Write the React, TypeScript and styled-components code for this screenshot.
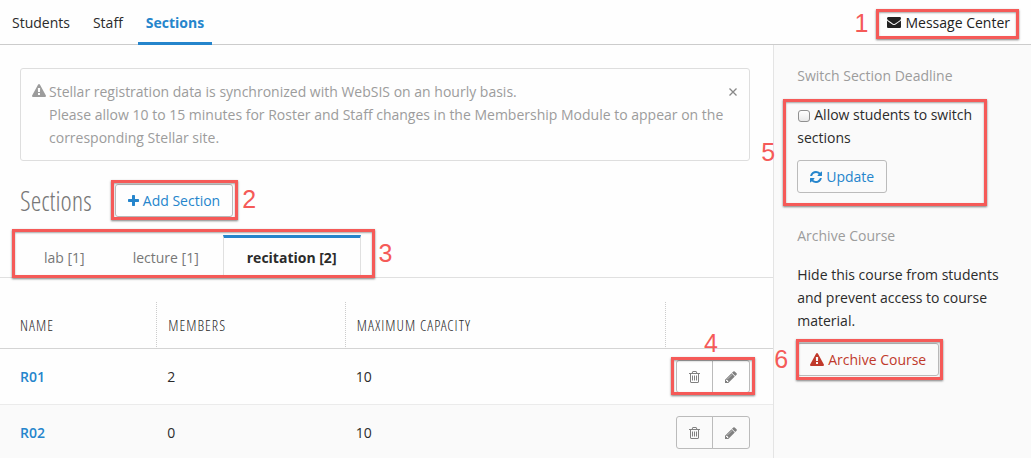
import React from "react";
import styled, { createGlobalStyle, css } from "styled-components";

const color = {
  text: "#2b2b2b",
  muted: "#9c9c9c",
  blue: "#2585cc",
  red: "#c0392b",
  line: "#cccccc",
  softLine: "#e4e4e4",
  panel: "#fafafa",
  callout: "#f55a58",
};

const condensed = `"Open Sans Condensed Light", "OpenSansCondensed-Light", "Open Sans Light Condensed", "Liberation Sans Narrow", "Open Sans Condensed", sans-serif`;

const GlobalStyle = createGlobalStyle`
  *, *::before, *::after { box-sizing: border-box; }
  body {
    margin: 0;
    background: #fefefe;
    color: ${color.text};
    font: 14px/23px "Open Sans", "Noto Sans", sans-serif;
  }
  a { text-decoration: none; color: inherit; }
  p, h1, h2 { margin: 0; }
`;

const Page = styled.div`
  display: flex;
  flex-direction: column;
  height: 100vh;
  overflow: hidden;
`;

const Header = styled.header`
  display: flex;
  flex: none;
  justify-content: space-between;
  align-items: stretch;
  height: 45px;
  padding: 0 21px 0 4px;
  border-bottom: 1px solid ${color.line};
`;

const Nav = styled.nav`
  display: flex;
  gap: 7px;
`;

const NavLink = styled.a<{ $active?: boolean }>`
  height: 45px;
  padding: 11px 8px 0;
  border-bottom: 3px solid transparent;
  ${(p) =>
    p.$active &&
    css`
      border-color: ${color.blue};
      color: ${color.blue};
      font-weight: 700;
    `}
`;

const MessageLink = styled.a`
  display: flex;
  align-items: center;
  gap: 4px;
  color: #222;
`;

const Body = styled.div`
  display: flex;
  flex: 1;
  min-height: 0;
`;

const Main = styled.main`
  flex: 0 0 75%;
  min-width: 0;
`;

const Sidebar = styled.aside`
  flex: 1;
  min-width: 0;
  padding: 19px 20px 0 23px;
  border-left: 1px solid ${color.softLine};
  background: ${color.panel};
`;

const Notice = styled.div`
  display: flex;
  align-items: flex-start;
  gap: 3px;
  margin: 23px 23px 0 20px;
  padding: 11px 12px 11px 11px;
  border: 1px solid #dedede;
  border-radius: 3px;
  color: ${color.muted};
  svg { margin-top: 4px; }
  p { flex: 1; }
`;

const CloseButton = styled.button`
  width: 8px;
  height: 23px;
  padding: 0;
  border: 0;
  background: none;
  color: #888;
  display: flex;
  align-items: center;
  justify-content: center;
  svg { margin: 0; }
`;

const TitleRow = styled.div`
  display: flex;
  align-items: center;
  gap: 23px;
  height: 33px;
  margin: 23px 20px 18px;
`;

const Title = styled.h1`
  color: #777;
  font: 300 27px/32px ${condensed};
`;

const Button = styled.button<{ $tone?: string }>`
  display: inline-flex;
  align-items: center;
  gap: 4px;
  height: 33px;
  padding: 0 12px;
  border: 1px solid #bbb;
  border-radius: 3px;
  background: transparent;
  color: ${(p) => p.$tone ?? color.blue};
  font: inherit;
`;

const Tabs = styled.div`
  display: flex;
  height: 43px;
  padding-left: 20px;
  border-bottom: 1px solid #e0e0e0;
`;

const TabRow = styled.div`
  display: flex;
`;

const Tab = styled.button<{ $active?: boolean }>`
  height: 42px;
  padding: 0 24px;
  border: 0;
  border-top: 3px solid transparent;
  background: none;
  color: #777;
  font: inherit;
  ${(p) =>
    p.$active &&
    css`
      padding: 0 23px;
      border-top-color: ${color.blue};
      border-left: 1px solid #e0e0e0;
      border-right: 1px solid #e0e0e0;
      color: ${color.text};
      font-weight: 700;
    `}
`;

const Table = styled.table`
  width: 100%;
  margin-top: 24px;
  border-collapse: separate;
  border-spacing: 0;
  table-layout: fixed;
`;

const HeadCell = styled.th<{ $width: string }>`
  width: ${(p) => p.$width};
  height: 47px;
  padding: 0 11px;
  border-bottom: 1px solid #d4d4d4;
  border-left: 1px dotted #ccc;
  color: ${color.text};
  font: 300 15px/23px ${condensed};
  letter-spacing: 1px;
  text-align: left;
  text-transform: uppercase;
  &:first-child { padding-left: 20px; border-left: 0; }
`;

const Row = styled.tr`
  &:nth-child(even) { background: ${color.panel}; }
`;

const Cell = styled.td`
  height: 56px;
  padding: 0 10px 0 11px;
  border-bottom: 1px solid #ebebeb;
  &:first-child { padding-left: 20px; }
`;

const SectionLink = styled.a`
  color: ${color.blue};
  font-weight: 600;
`;

const ButtonGroup = styled.div`
  display: flex;
`;

const IconButton = styled.button`
  display: flex;
  align-items: center;
  justify-content: center;
  width: 37px;
  height: 33px;
  padding: 0;
  border: 1px solid #bbb;
  border-radius: 3px 0 0 3px;
  background: transparent;
  color: #808080;
  & + & {
    width: 38px;
    margin-left: -1px;
    border-radius: 0 3px 3px 0;
  }
`;

const SideHeading = styled.h2`
  color: ${color.muted};
  font-size: 14px;
  font-weight: 400;
`;

const SideBlock = styled.div`
  display: flex;
  flex-direction: column;
  align-items: flex-start;
  gap: 11px;
  margin: 16px 0 31px;
`;

const Checkbox = styled.input`
  appearance: none;
  width: 12px;
  height: 12px;
  margin: 0 4px 0 1px;
  border: 1px solid #909090;
  border-radius: 3px;
  background: linear-gradient(#fff, #e8e8e8);
  vertical-align: -2px;
`;

const CalloutBox = styled.div`
  position: relative;
  display: flex;
  width: fit-content;
`;

const Ring = styled.span<{ $inset: string }>`
  position: absolute;
  inset: ${(p) => p.$inset};
  border: 3px solid ${color.callout};
  box-shadow: 0 1px 2px rgba(0, 0, 0, 0.5), inset 0 1px 2px rgba(0, 0, 0, 0.35);
  pointer-events: none;
`;

type Side = "left" | "right" | "top";

const Marker = styled.span<{ $side: Side }>`
  position: absolute;
  color: ${color.callout};
  font: 25px/24px "Liberation Sans", Arial, sans-serif;
  ${(p) =>
    p.$side === "top"
      ? "left: 0; right: 4px; bottom: 100%; margin-bottom: 5px; text-align: center;"
      : "top: 50%; margin-top: -13px;"}
  ${(p) => p.$side === "left" && "right: 100%; margin-right: 11px;"}
  ${(p) => p.$side === "right" && "left: 100%; margin-left: 7px;"}
`;

function Callout(props: {
  n: number;
  side: Side;
  inset: string;
  children: React.ReactNode;
}) {
  return (
    <CalloutBox>
      {props.children}
      <Ring $inset={props.inset}>
        <Marker $side={props.side}>{props.n}</Marker>
      </Ring>
    </CalloutBox>
  );
}

const icons = {
  warning: {
    width: 14,
    viewBox: "0 0 1792 1792",
    d: "M1024 1375v-190q0-14-9.5-23.5t-22.5-9.5h-192q-13 0-22.5 9.5t-9.5 23.5v190q0 14 9.5 23.5t22.5 9.5h192q13 0 22.5-9.5t9.5-23.5zm-2-374l18-459q0-12-10-19-13-11-24-11h-220q-11 0-24 11-10 7-10 21l17 457q0 10 10 16.5t24 6.5h185q14 0 23.5-6.5t10.5-16.5zm-14-934l768 1408q35 63-2 126-17 29-46.5 46t-63.5 17h-1536q-34 0-63.5-17t-46.5-46q-37-63-2-126l768-1408q17-31 47-49t65-18 65 18 47 49z",
  },
  envelope: {
    width: 14,
    viewBox: "0 0 1792 1792",
    d: "M1792 710v794q0 66-47 113t-113 47h-1472q-66 0-113-47t-47-113v-794q44 49 101 87 362 246 497 345 57 42 92.5 65.5t94.5 48 110 24.5h2q51 0 110-24.5t94.5-48 92.5-65.5q170-123 498-345 57-39 100-87zm0-294q0 79-49 151t-122 123q-376 261-468 325-10 7-42.5 31t-54 38.5-52 32.5-57.5 27-50 9h-2q-23 0-50-9t-57.5-27-52-32.5-54-38.5-42.5-31q-91-64-262-182.5t-205-142.5q-62-42-117-115.5t-55-136.5q0-78 41.5-130t118.5-52h1472q65 0 112.5 47t47.5 113z",
  },
  plus: {
    width: 11,
    viewBox: "192 0 1408 1792",
    d: "M1600 736v192q0 40-28 68t-68 28h-416v416q0 40-28 68t-68 28h-192q-40 0-68-28t-28-68v-416h-416q-40 0-68-28t-28-68v-192q0-40 28-68t68-28h416v-416q0-40 28-68t68-28h192q40 0 68 28t28 68v416h416q40 0 68 28t28 68z",
  },
  refresh: {
    width: 12,
    viewBox: "128 0 1536 1792",
    d: "M1639 1056q0 5-1 7-64 268-268 434.5t-478 166.5q-146 0-282.5-55t-243.5-157l-129 129q-19 19-45 19t-45-19-19-45v-448q0-26 19-45t45-19h448q26 0 45 19t19 45-19 45l-137 137q71 66 161 102t187 36q134 0 250-65t186-179q11-17 53-117 8-23 30-23h192q13 0 22.5 9.5t9.5 22.5zm25-800v448q0 26-19 45t-45 19h-448q-26 0-45-19t-19-45 19-45l138-138q-148-137-349-137-134 0-250 65t-186 179q-11 17-53 117-8 23-30 23h-199q-13 0-22.5-9.5t-9.5-22.5v-7q65-268 270-434.5t480-166.5q146 0 284 55.5t245 156.5l130-129q19-19 45-19t45 19 19 45z",
  },
  trash: {
    width: 11,
    viewBox: "192 0 1408 1792",
    d: "M704 736v576q0 14-9 23t-23 9h-64q-14 0-23-9t-9-23v-576q0-14 9-23t23-9h64q14 0 23 9t9 23zm256 0v576q0 14-9 23t-23 9h-64q-14 0-23-9t-9-23v-576q0-14 9-23t23-9h64q14 0 23 9t9 23zm256 0v576q0 14-9 23t-23 9h-64q-14 0-23-9t-9-23v-576q0-14 9-23t23-9h64q14 0 23 9t9 23zm128 724v-948h-896v948q0 22 7 40.5t14.5 27 10.5 8.5h832q3 0 10.5-8.5t14.5-27 7-40.5zm-672-1076h448l-48-117q-7-9-17-11h-317q-10 2-17 11zm928 32v64q0 14-9 23t-23 9h-96v948q0 83-47 143.5t-113 60.5h-832q-66 0-113-58.5t-47-141.5v-952h-96q-14 0-23-9t-9-23v-64q0-14 9-23t23-9h309l70-167q15-37 54-63t79-26h320q40 0 79 26t54 63l70 167h309q14 0 23 9t9 23z",
  },
  pencil: {
    width: 14,
    viewBox: "0 0 1792 1792",
    d: "M491 1536l91-91-235-235-91 91v107h128v128h107zm523-928q0-22-22-22-10 0-17 7l-542 542q-7 7-7 17 0 22 22 22 10 0 17-7l542-542q7-7 7-17zm-54-192l416 416-832 832h-416v-416zm683 96q0 53-37 90l-166 166-416-416 166-165q36-38 90-38 53 0 91 38l235 234q37 39 37 91z",
  },
};

const Svg = styled.svg`
  flex: none;
  display: block;
  fill: currentColor;
`;

function Icon({ name }: { name: keyof typeof icons }) {
  const { width, viewBox, d } = icons[name];
  return (
    <Svg width={width} height="14" viewBox={viewBox} aria-hidden="true">
      <path d={d} />
    </Svg>
  );
}

const sections = [
  { name: "R01", members: 2, capacity: 10 },
  { name: "R02", members: 0, capacity: 10 },
];

function RowActions({ name }: { name: string }) {
  return (
    <ButtonGroup>
      <IconButton aria-label={`Delete ${name}`}>
        <Icon name="trash" />
      </IconButton>
      <IconButton aria-label={`Edit ${name}`}>
        <Icon name="pencil" />
      </IconButton>
    </ButtonGroup>
  );
}

export default function App() {
  return (
    <Page>
      <GlobalStyle />
      <Header>
        <Nav>
          <NavLink href="#students">Students</NavLink>
          <NavLink href="#staff">Staff</NavLink>
          <NavLink href="#sections" $active>
            Sections
          </NavLink>
        </Nav>
        <Callout n={1} side="left" inset="9px -9px 5px -11px">
          <MessageLink href="#messages">
            <Icon name="envelope" />
            Message Center
          </MessageLink>
        </Callout>
      </Header>
      <Body>
        <Main>
          <Notice>
            <Icon name="warning" />
            <p>
              Stellar registration data is synchronized with WebSIS on an hourly basis.
              <br />
              Please allow 10 to 15 minutes for Roster and Staff changes in the Membership
              Module to appear on the corresponding Stellar site.
            </p>
            <CloseButton aria-label="Close">
              <Svg width="8" height="8" viewBox="0 0 8 8" aria-hidden="true">
                <path d="M0.5 0.5L7.5 7.5M7.5 0.5L0.5 7.5" stroke="currentColor" strokeWidth="1.3" />
              </Svg>
            </CloseButton>
          </Notice>
          <TitleRow>
            <Title>Sections</Title>
            <Callout n={2} side="right" inset="-4px -5px -3px -4px">
              <Button>
                <Icon name="plus" />
                Add Section
              </Button>
            </Callout>
          </TitleRow>
          <Tabs>
            <Callout n={3} side="right" inset="-6px -14px -1px -8px">
              <TabRow role="tablist">
                <Tab role="tab">lab [1]</Tab>
                <Tab role="tab">lecture [1]</Tab>
                <Tab role="tab" aria-selected $active>
                  recitation [2]
                </Tab>
              </TabRow>
            </Callout>
          </Tabs>
          <Table>
            <thead>
              <tr>
                <HeadCell $width="20.2%">Name</HeadCell>
                <HeadCell $width="24.4%">Members</HeadCell>
                <HeadCell $width="41.4%">Maximum Capacity</HeadCell>
                <HeadCell $width="14%" aria-label="Actions" />
              </tr>
            </thead>
            <tbody>
              {sections.map((s, i) => (
                <Row key={s.name}>
                  <Cell>
                    <SectionLink href={`#${s.name}`}>{s.name}</SectionLink>
                  </Cell>
                  <Cell>{s.members}</Cell>
                  <Cell>{s.capacity}</Cell>
                  <Cell>
                    {i === 0 ? (
                      <Callout n={4} side="top" inset="-3px -5px -2px -5px">
                        <RowActions name={s.name} />
                      </Callout>
                    ) : (
                      <RowActions name={s.name} />
                    )}
                  </Cell>
                </Row>
              ))}
            </tbody>
          </Table>
        </Main>
        <Sidebar>
          <SideHeading>Switch Section Deadline</SideHeading>
          <Callout n={5} side="left" inset="12px 24px 18px -14px">
            <SideBlock>
              <label>
                <Checkbox type="checkbox" />
                Allow students to switch sections
              </label>
              <Button>
                <Icon name="refresh" />
                Update
              </Button>
            </SideBlock>
          </Callout>
          <SideHeading>Archive Course</SideHeading>
          <SideBlock>
            <p>Hide this course from students and prevent access to course material.</p>
            <Callout n={6} side="left" inset="-4px -4px -4px -1px">
              <Button $tone={color.red}>
                <Icon name="warning" />
                Archive Course
              </Button>
            </Callout>
          </SideBlock>
        </Sidebar>
      </Body>
    </Page>
  );
}
